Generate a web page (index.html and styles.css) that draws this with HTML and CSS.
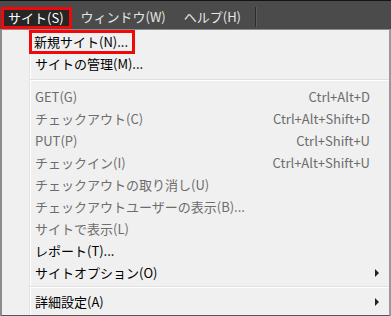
FILE: index.html
```html
<!DOCTYPE html>
<html lang="ja">
<head>
    <meta charset="UTF-8">
    <title>サイトメニュー</title>
    <link rel="stylesheet" href="styles.css">
</head>
<body>
    <div class="menubar">
        <div class="mb-item active">サイト(S)</div>
        <div class="mb-item">ウィンドウ(W)</div>
        <div class="mb-item">ヘルプ(H)</div>
        <div class="mb-sep"></div>
    </div>
    <div class="menu">
        <div class="item"><span class="focus">新規サイト(N)...</span></div>
        <div class="item"><span>サイトの管理(M)...</span></div>
        <div class="sep first"></div>
        <div class="item off"><span>GET(G)</span><span class="key">Ctrl+Alt+D</span></div>
        <div class="item off"><span>チェックアウト(C)</span><span class="key">Ctrl+Alt+Shift+D</span></div>
        <div class="item off"><span>PUT(P)</span><span class="key">Ctrl+Shift+U</span></div>
        <div class="item off"><span>チェックイン(I)</span><span class="key">Ctrl+Alt+Shift+U</span></div>
        <div class="item off"><span>チェックアウトの取り消し(U)</span></div>
        <div class="item off"><span>チェックアウトユーザーの表示(B)...</span></div>
        <div class="item off"><span>サイトで表示(L)</span></div>
        <div class="item"><span>レポート(T)...</span></div>
        <div class="item"><span>サイトオプション(O)</span><span class="arrow"></span></div>
        <div class="sep second"></div>
        <div class="item"><span>詳細設定(A)</span><span class="arrow"></span></div>
    </div>
</body>
</html>
```

FILE: styles.css
```css
body {
    margin: 0;
    width: 391px;
    height: 316px;
    overflow: hidden;
    background: #f0f0f0;
    font-family: 'Noto Sans CJK JP', sans-serif;
    font-size: 13px;
}
.menubar {
    height: 28px;
    background: #4b4b4b;
    border-top: 1px solid #141414;
    display: flex;
    align-items: flex-end;
    padding-left: 1px;
}
.mb-item {
    height: 22px;
    line-height: 20px;
    padding: 0 9px;
    color: #e6e6e6;
    box-sizing: border-box;
}
.mb-item.active {
    background: #262626;
    color: #fff;
    border: 3px solid #ee0a0a;
    padding: 0 5px 0 4px;
    line-height: 16px;
}
.mb-sep {
    width: 1px;
    height: 20px;
    margin: 0 0 2px 5px;
    background: #2c2c2c;
    border-right: 1px solid #5c5c5c;
}
.menu {
    height: 284px;
    border-top: 1px solid #8c8c8c;
    border-left: 2px solid #8c8c8c;
    border-right: 2px solid #9a9a9a;
    border-bottom: 2px solid #555;
    padding-top: 1px;
    background: linear-gradient(to right, #f0f0f0 27px, #e2e3e3 27px, #e2e3e3 28px, #fff 28px, #fff 29px, #f0f0f0 29px);
}
.item {
    height: 22px;
    line-height: 22px;
    padding: 0 19px 0 33px;
    display: flex;
    justify-content: space-between;
    align-items: center;
    color: #000;
}
.item.off {
    color: #6d6d6d;
}
.focus {
    display: inline-block;
    line-height: 18px;
    border: 3px solid #ee0a0a;
    padding: 0 4px 0 2px;
    margin: -1px 0 -1px -6px;
}
.sep {
    margin-left: 28px;
    border-top: 1px solid #e0e0e0;
    border-bottom: 1px solid #fff;
}
.sep.first {
    margin-top: 4px;
    margin-bottom: 5px;
}
.sep.second {
    margin-top: 2px;
    margin-bottom: 3px;
}
.arrow {
    width: 0;
    height: 0;
    border-left: 4px solid #222;
    border-top: 4px solid transparent;
    border-bottom: 4px solid transparent;
    margin-right: -9px;
}
```
